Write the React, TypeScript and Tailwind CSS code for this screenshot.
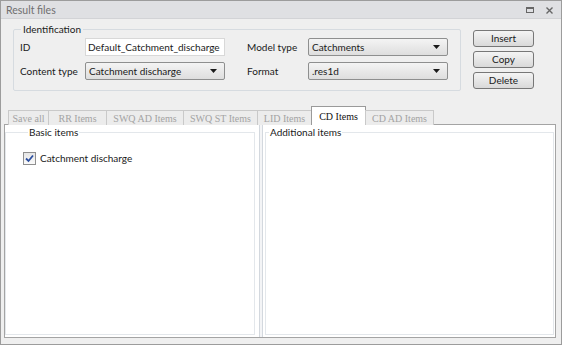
import React from "react";

const Caret = () => (
  <svg width="7" height="4" viewBox="0 0 7 4" className="shrink-0">
    <path d="M0 0H7L3.5 4Z" fill="#1a1a1a" />
  </svg>
);

function Select({ value }: { value: string }) {
  return (
    <div className="w-[140px] h-[18px] rounded-[2px] border border-[#8e8f8f] bg-gradient-to-b from-[#f4f4f4] to-[#dedede] flex items-center justify-between pl-[3px] pr-[7px] text-[#1a1a1a]">
      <span>{value}</span>
      <Caret />
    </div>
  );
}

function Btn({ label }: { label: string }) {
  return (
    <div className="w-[61px] h-[17px] rounded-[3px] border border-[#777] bg-gradient-to-b from-[#f4f4f4] to-[#d9d9d9] flex items-center justify-center text-[#1a1a1a]">
      {label}
    </div>
  );
}

const tabs: { label: string; w: string; active?: boolean }[] = [
  { label: "Save all", w: "w-[41px]" },
  { label: "RR Items", w: "w-[59px]" },
  { label: "SWQ AD Items", w: "w-[78px]" },
  { label: "SWQ ST Items", w: "w-[75px]" },
  { label: "LID Items", w: "w-[55px]" },
  { label: "CD Items", w: "w-[55px]", active: true },
  { label: "CD AD Items", w: "w-[69px]" },
];

export default function App() {
  return (
    <div className="w-[562px] h-[345px] bg-[#efefef] border border-[#9c9c9c] flex flex-col font-['Lato',sans-serif] text-[10px] leading-[13px] text-[#1a1a1a] overflow-hidden">
      {/* title bar */}
      <div className="h-[18px] shrink-0 bg-[#dfe0e3] border-b border-[#d2d3d6] flex items-center justify-between pl-[5px] pr-[8px] pt-[1px]">
        <span className="text-[#6f6f6f] text-[10.5px]">Result files</span>
        <div className="flex items-center gap-[12px]">
          <div className="w-[8px] h-[6px] border border-[#666] border-t-2" />
          <svg width="7" height="7" viewBox="0 0 7 7">
            <path d="M0.5 0.5L6.5 6.5M6.5 0.5L0.5 6.5" stroke="#666" strokeWidth="1.4" />
          </svg>
        </div>
      </div>

      {/* top section */}
      <div className="flex items-start pl-[12px] shrink-0">
        <fieldset className="mt-[4px] w-[448px] border border-[#d6dbe0] rounded-[2px] pl-[6px] pr-[11px] pb-[10px]">
          <legend className="ml-[1px] px-[2px] leading-[13px] text-[#1a1a1a]">Identification</legend>
          <div className="flex flex-col gap-[6px] pt-[2px]">
            <div className="flex items-center h-[18px]">
              <span className="w-[65px]">ID</span>
              <div className="w-[140px] h-[18px] bg-white border border-[#d8d8d8] flex items-center pl-[2px]">
                Default_Catchment_discharge
              </div>
              <span className="ml-[22px] w-[61px]">Model type</span>
              <Select value="Catchments" />
            </div>
            <div className="flex items-center h-[18px]">
              <span className="w-[65px]">Content type</span>
              <Select value="Catchment discharge" />
              <span className="ml-[22px] w-[61px]">Format</span>
              <Select value=".res1d" />
            </div>
          </div>
        </fieldset>
        <div className="ml-[12px] mt-[11px] flex flex-col gap-[4px]">
          <Btn label="Insert" />
          <Btn label="Copy" />
          <Btn label="Delete" />
        </div>
      </div>

      {/* tabs */}
      <div className="flex items-end pl-[7px] mt-[15px] h-[19px] shrink-0 relative z-10 font-['Liberation_Serif',serif] text-[10px]">
        {tabs.map((t) =>
          t.active ? (
            <div
              key={t.label}
              className={`${t.w} -ml-px h-[19px] bg-white border border-b-0 border-[#9a9a9a] flex items-center justify-center text-[#111]`}
            >
              {t.label}
            </div>
          ) : (
            <div
              key={t.label}
              className={`${t.w} -ml-px first:ml-0 h-[15px] bg-[#ececec] border border-b-0 border-[#c9c9c9] flex items-center justify-center text-[#a3a3a3]`}
            >
              {t.label}
            </div>
          )
        )}
      </div>

      {/* panel */}
      <div className="flex-1 ml-[3px] mr-[5px] mb-[6px] -mt-px bg-white border border-[#a4a4a4] flex">
        <div className="w-[254px] flex pt-[1px] pr-[4px]">
          <fieldset className="flex-1 border border-[#e3e7eb] pl-[17px] mb-[2px]">
            <legend className="ml-[5px] px-[1px] leading-[13px]">Basic items</legend>
            <div className="flex items-center gap-[4px] mt-[13px]">
              <div className="w-[13px] h-[13px] border border-[#8f8f8f] bg-gradient-to-b from-[#e6e6e6] to-[#fafafa] flex items-center justify-center">
                <svg width="9" height="9" viewBox="0 0 9 9">
                  <path d="M1 4.5L3.5 7L8 1.5" stroke="#2c4fa0" strokeWidth="1.8" fill="none" />
                </svg>
              </div>
              <span>Catchment discharge</span>
            </div>
          </fieldset>
        </div>
        <div className="w-[4px] border-l border-r border-[#d3d8de] bg-[#f3f4f6]" />
        <div className="flex-1 flex pt-[1px] pl-[2px] pr-[1px]">
          <fieldset className="flex-1 border border-[#e3e7eb] mb-[2px]">
            <legend className="ml-[3px] px-[1px] leading-[13px]">Additional items</legend>
          </fieldset>
        </div>
      </div>
    </div>
  );
}
